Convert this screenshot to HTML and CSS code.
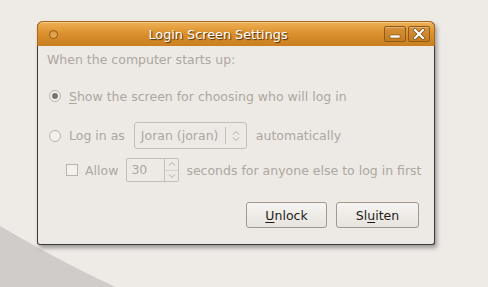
FILE: index.html
```html
<!DOCTYPE html>
<html lang="en">
<head>
    <meta charset="UTF-8">
    <title>Login Screen Settings</title>
    <link rel="stylesheet" href="styles.css">
</head>
<body>
    <div class="window">
        <!-- Titelrad med fönsterknappar -->
        <div class="titlebar">
            <span class="menu-dot"></span>
            <span class="title">Login Screen Settings</span>
            <span class="wm-btn">
                <svg width="12" height="10" viewBox="0 0 12 10"><rect x="1" y="6" width="10" height="3" fill="#fff" stroke="#7a4a10" stroke-width="0.6"/></svg>
            </span>
            <span class="wm-btn">
                <svg width="12" height="12" viewBox="0 0 12 12"><path d="M2 2 L10 10 M10 2 L2 10" stroke="#7a4a10" stroke-width="3.6" stroke-linecap="square"/><path d="M2 2 L10 10 M10 2 L2 10" stroke="#fff" stroke-width="2.2" stroke-linecap="square"/></svg>
            </span>
        </div>

        <div class="content">
            <div class="heading">When the computer starts up:</div>

            <div class="row row-first">
                <span class="radio checked"></span>
                <span><u>S</u>how the screen for choosing who will log in</span>
            </div>

            <div class="row row-second">
                <span class="radio"></span>
                <span>Log in as</span>
                <span class="combo">
                    <span class="combo-text">Joran (joran)</span>
                    <span class="combo-arrow">
                        <svg width="8" height="12" viewBox="0 0 8 12"><path d="M1 4.5 L4 1.5 L7 4.5 M1 7.5 L4 10.5 L7 7.5" fill="none" stroke="#b3ada5" stroke-width="1"/></svg>
                    </span>
                </span>
                <span>automatically</span>
            </div>

            <div class="row row-third">
                <span class="check"></span>
                <span>Allow</span>
                <span class="spin">
                    <span class="spin-text">30</span>
                    <span class="spin-arrows">
                        <span class="spin-btn"><svg width="8" height="6" viewBox="0 0 8 6"><path d="M1 4.5 L4 1.5 L7 4.5" fill="none" stroke="#b3ada5"/></svg></span>
                        <span class="spin-btn"><svg width="8" height="6" viewBox="0 0 8 6"><path d="M1 1.5 L4 4.5 L7 1.5" fill="none" stroke="#b3ada5"/></svg></span>
                    </span>
                </span>
                <span>seconds for anyone else to log in first</span>
            </div>

            <div class="actions">
                <button class="btn btn-unlock"><u>U</u>nlock</button>
                <button class="btn btn-close">Sl<u>u</u>iten</button>
            </div>
        </div>
    </div>
</body>
</html>
```

FILE: styles.css
```css
/* Skrivbordet bakom fönstret */
body {
    margin: 0;
    height: 287px;
    overflow: hidden;
    font-family: "DejaVu Sans", sans-serif;
    font-size: 12.5px;
    background: radial-gradient(circle at 642px -845px, #eeebe7 1248px, #d0ccc9 1249px);
}
.window {
    margin: 21px 0 0 37px;
    width: 398px;
    height: 224px;
    box-sizing: border-box;
    border: 1px solid #3d3a36;
    border-top: none;
    border-radius: 6px 6px 3px 3px;
    background: #edeae6;
    box-shadow: 2px 3px 4px rgba(0, 0, 0, 0.35);
    display: flex;
    flex-direction: column;
}
.titlebar {
    height: 24px;
    margin: 0 -1px;
    display: flex;
    align-items: center;
    gap: 2px;
    padding: 0 4px 0 11px;
    border: 1px solid #a8681c;
    border-bottom: none;
    border-radius: 6px 6px 0 0;
    background: linear-gradient(#eeb155, #dc922f 45%, #c97e20);
    box-shadow: inset 0 1px 0 rgba(255, 255, 255, 0.35);
}
.menu-dot {
    width: 7px;
    height: 7px;
    border-radius: 50%;
    border: 1px solid #8e5a18;
    background: linear-gradient(#d99a45, #e8ac56);
}
.title {
    flex: 1;
    text-align: center;
    color: #fff;
    font-size: 12.8px;
    text-shadow: 1px 1px 1px #4a2c06;
    padding-right: 6px;
}
.wm-btn {
    width: 20px;
    height: 14px;
    border: 1px solid #8e5a18;
    border-radius: 2px;
    background: linear-gradient(#d8923a, #c47c22);
    box-shadow: inset 0 1px 0 rgba(255, 255, 255, 0.3);
    display: flex;
    align-items: center;
    justify-content: center;
}
.content {
    flex: 1;
    padding: 6px 9px 0 9px;
    color: #aca79f;
    display: flex;
    flex-direction: column;
    white-space: nowrap;
}
.heading {
    line-height: 16px;
}
.row {
    display: flex;
    align-items: center;
    gap: 8px;
}
.row-first {
    height: 26px;
    margin-top: 15px;
    padding-left: 2px;
}
.row-second {
    height: 27px;
    margin-top: 13px;
    padding-left: 2px;
}
.row-third {
    height: 24px;
    margin-top: 9px;
    padding-left: 19px;
    gap: 7px;
}
u {
    text-decoration: underline;
    text-underline-offset: 2px;
}
.radio {
    width: 10px;
    height: 10px;
    border-radius: 50%;
    border: 1px solid #b9b3ab;
    background: #f3f1ee;
    position: relative;
}
.radio.checked::after {
    content: "";
    position: absolute;
    left: 2px;
    top: 2px;
    width: 6px;
    height: 6px;
    border-radius: 50%;
    background: #7d766e;
}
.check {
    width: 10px;
    height: 10px;
    border: 1px solid #b9b3ab;
    background: #f3f1ee;
}
.combo {
    width: 113px;
    height: 27px;
    box-sizing: border-box;
    border: 1px solid #c4beb6;
    border-radius: 3px;
    display: flex;
    align-items: center;
    margin: 0 1px;
}
.combo-text {
    flex: 1;
    padding-left: 6px;
}
.combo-arrow {
    width: 20px;
    height: 17px;
    border-left: 1px solid #c4beb6;
    display: flex;
    align-items: center;
    justify-content: center;
}
.spin {
    width: 53px;
    height: 24px;
    box-sizing: border-box;
    border: 1px solid #c4beb6;
    border-radius: 2px;
    display: flex;
    margin-left: 1px;
}
.spin-text {
    flex: 1;
    padding-left: 4px;
    line-height: 22px;
}
.spin-arrows {
    width: 13px;
    border-left: 1px solid #c4beb6;
    display: flex;
    flex-direction: column;
}
.spin-btn {
    flex: 1;
    display: flex;
    align-items: center;
    justify-content: center;
}
.spin-btn + .spin-btn {
    border-top: 1px solid #d6d1ca;
}
.actions {
    display: flex;
    justify-content: flex-end;
    gap: 9px;
    margin-top: 20px;
    padding-right: 6px;
}
.btn {
    height: 26px;
    font-family: "DejaVu Sans", sans-serif;
    font-size: 12.5px;
    color: #1c1b1a;
    border: 1px solid #9f998f;
    border-radius: 3px;
    background: linear-gradient(#f6f4f1, #e7e3de);
    padding: 0;
}
.btn-unlock {
    width: 81px;
}
.btn-close {
    width: 83px;
}
```
